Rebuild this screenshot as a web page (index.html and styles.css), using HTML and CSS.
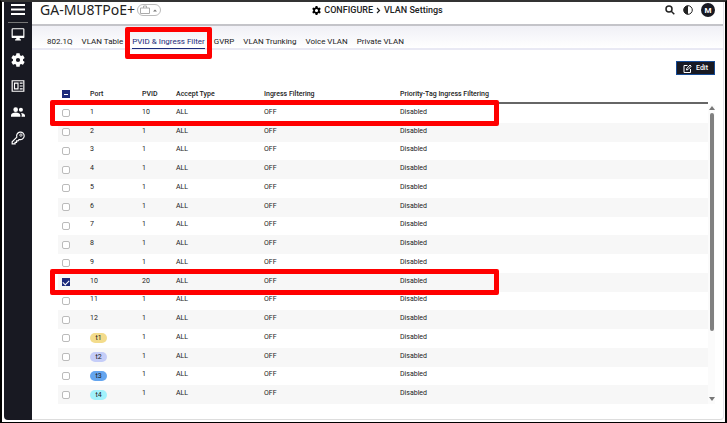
FILE: index.html
```html
<!DOCTYPE html>
<html lang="en">
<head>
  <meta charset="UTF-8" />
  <meta name="viewport" content="width=device-width, initial-scale=1.0" />
  <title>GA-MU8TPoE+ - VLAN Settings</title>
  <link rel="stylesheet" href="styles.css">
</head>
<body>
  <div class="frame">
    <nav class="sidebar" aria-label="Main menu">
      <button class="menu-btn" aria-label="Menu">
        <svg width="14" height="13" viewBox="0 0 14 13"><path d="M0 2h14M0 6.500h14M0 11h14" fill="none" stroke="#fff" stroke-width="2"/></svg>
      </button>
      <a href="#" aria-label="Monitor">
        <svg viewBox="0 0 24 24"><path d="M21 2H3a2 2 0 0 0-2 2v13a2 2 0 0 0 2 2h6v2H7v2h10v-2h-2v-2h6a2 2 0 0 0 2-2V4a2 2 0 0 0-2-2zm0 13H3V4h18z"/></svg>
      </a>
      <a href="#" aria-label="Configure">
        <svg viewBox="2 2 20 20"><path d="M19.140 12.940c.04-.3.060-.61.060-.94s-.02-.64-.07-.94l2.030-1.580a.49.49 0 0 0 .12-.61l-1.920-3.320a.49.49 0 0 0-.59-.22l-2.390.96a7 7 0 0 0-1.620-.94l-.36-2.540a.48.48 0 0 0-.48-.41h-3.840a.48.48 0 0 0-.47.41l-.36 2.540a7.400 7.400 0 0 0-1.620.94l-2.390-.96a.48.48 0 0 0-.59.22L2.740 8.870a.48.48 0 0 0 .12.61l2.030 1.580c-.05.3-.09.63-.09.94s.02.64.07.94l-2.030 1.580a.49.49 0 0 0-.12.61l1.920 3.320c.12.22.37.29.59.22l2.390-.96c.5.38 1.030.7 1.620.94l.36 2.540c.05.24.24.41.48.41h3.840c.24 0 .44-.17.47-.41l.36-2.540a7.400 7.400 0 0 0 1.620-.94l2.390.96c.22.080.47 0 .59-.22l1.920-3.320a.48.48 0 0 0-.12-.61zM12 15a3 3 0 1 1 0-6 3 3 0 0 1 0 6z"/></svg>
      </a>
      <a href="#" aria-label="Ports">
        <svg viewBox="0 0 24 24"><path d="M1 2h22v20H1zm2 2v16h18V4zM5 6h8v12H5zm2 2v8h4V8zm8-2h5v2h-5zm0 5h5v2h-5zm0 5h5v2h-5z" fill-rule="evenodd"/></svg>
      </a>
      <a href="#" aria-label="Users">
        <svg viewBox="0 0 24 24"><circle cx="8" cy="8" r="4"/><circle cx="17" cy="8" r="3.500"/><path d="M0 20v-2c0-3.500 4-5 8-5s8 1.500 8 5v2zM18 20h6v-2c0-3-3-4.500-7-4.500 1 1 1.500 2.500 1.500 4z"/></svg>
      </a>
      <a href="#" aria-label="Security">
        <svg viewBox="0 0 24 24"><path d="M10 10.500a6.500 6.500 0 1 1 4 4L12 17H9.500v2.500H7V22H2v-3.500z" fill="none" stroke="#fff" stroke-width="2"/><circle cx="17" cy="7" r="2" fill="none" stroke="#fff" stroke-width="1.500"/></svg>
      </a>
    </nav>

    <main class="main">
      <header class="topbar">
        <div class="device">
          <h1>GA-MU8TPoE+</h1>
          <button class="device-btn" aria-label="Device">
            <svg width="18" height="10" viewBox="0 0 18 10"><path d="M.5 3h9v5.500h-9zM3.500 3V1h3v2" fill="none" stroke="#aaa"/><path d="M13 6.500l2-2 2 2z" fill="#777"/></svg>
          </button>
        </div>
        <div class="crumbs">
          <svg width="9" height="9" viewBox="2 2 20 20"><path d="M10 2h4l.6 3 2 1.200 2.900-1 2 3.500L19.300 11v2l2.200 2.300-2 3.500-2.900-1-2 1.200-.6 3h-4l-.6-3-2-1.200-2.900 1-2-3.500L4.700 13v-2L2.500 8.700l2-3.500 2.900 1 2-1.200zM12 8.500a3.500 3.500 0 1 0 0 7 3.500 3.500 0 0 0 0-7z" fill-rule="evenodd"/></svg>
          <span>CONFIGURE</span>
          <svg width="5" height="7" viewBox="0 0 5 7"><path d="M1 1l2.500 2.500L1 6" fill="none" stroke="#222" stroke-width="1.200"/></svg>
          <span>VLAN Settings</span>
        </div>
        <div class="tools">
          <button aria-label="Search"><svg width="10" height="10" viewBox="0 0 10 10"><path d="M6.500 6.500L9.300 9.300M7 4a3 3 0 1 1-6 0 3 3 0 0 1 6 0z" fill="none" stroke="#222" stroke-width="1.500"/></svg></button>
          <button aria-label="Contrast"><svg width="10" height="10" viewBox="0 0 10 10"><circle cx="5" cy="5" r="4.300" fill="#fff" stroke="#222"/><path d="M5 .7a4.300 4.300 0 0 0 0 8.600z" fill="#222"/></svg></button>
          <button class="avatar">M</button>
        </div>
      </header>

      <nav class="tabs" aria-label="VLAN pages">
        <a href="#">802.1Q</a>
        <a href="#">VLAN Table</a>
        <a href="#" class="active">PVID &amp; Ingress Filter<span class="mark mark-tab"></span></a>
        <a href="#">GVRP</a>
        <a href="#">VLAN Trunking</a>
        <a href="#">Voice VLAN</a>
        <a href="#">Private VLAN</a>
      </nav>

      <section class="content">
        <div class="actions">
          <button class="edit-btn">
            <svg width="9" height="9" viewBox="0 0 9 9"><path d="M4.500 1.500H1v7h6.500V5M3.500 6l.3-1.500L7 1l1.200 1.200L5 5.600z" fill="none" stroke="#fff"/></svg>
            Edit
          </button>
        </div>

        <div class="table-area">
          <table>
            <thead>
              <tr>
                <th class="col-check"><input type="checkbox" id="checkAll" aria-label="Select all"></th>
                <th class="col-port">Port</th>
                <th class="col-pvid">PVID</th>
                <th class="col-type">Accept Type</th>
                <th class="col-ingress">Ingress Filtering</th>
                <th>Priority-Tag Ingress Filtering</th>
              </tr>
            </thead>
            <tbody id="rows"></tbody>
          </table>
          <div class="scrollbar">
            <span class="arrow up"></span>
            <span class="thumb"></span>
            <span class="arrow down"></span>
          </div>
        </div>
      </section>
    </main>
  </div>

  <script src="script.js"></script>
</body>
</html>
```
FILE: styles.css
```css
:root {
  --dark: #181922;
  --navy: #1b2a7b;
  --mark: #ff0000;
}

* {
  box-sizing: border-box;
}

body {
  margin: 0;
  color: #222;
  font-family: Roboto, sans-serif;
  font-size: 7px;
}

a {
  color: inherit;
  text-decoration: none;
}

button {
  border: none;
  padding: 0;
  background: none;
  color: inherit;
  font-family: inherit;
}

svg {
  display: block;
}

.frame {
  display: flex;
  min-height: 100vh;
  border: 2px solid #000;
  border-top-color: #333;
  padding: 0 1px 2px 2px;
  background: #fff;
}

.sidebar {
  width: 28px;
  flex-shrink: 0;
  display: flex;
  flex-direction: column;
  align-items: center;
  gap: 12px;
  background: var(--dark);
  border-radius: 0 0 0 4px;
}

.menu-btn {
  width: 20px;
  height: 21px;
  padding: 1px 3px 0;
  display: flex;
  border-bottom: 1px solid #777;
  margin-bottom: -8px;
}

.sidebar a svg {
  width: 14px;
  height: 14px;
  fill: #fff;
}

.main {
  flex: 1;
  min-width: 0;
  border-right: 1px solid #e4e4ea;
  border-bottom: 1px solid #ddd;
  border-radius: 0 0 4px 0;
}

.topbar {
  display: grid;
  grid-template-columns: 1fr auto 1fr;
  align-items: center;
  height: 24px;
  padding: 0 8px 6px;
  border-bottom: 2px solid #c4c4c9;
}

.device {
  display: flex;
  align-items: center;
  gap: 2px;
}

h1 {
  margin: 0;
  font-family: "Noto Sans", sans-serif;
  font-size: 14px;
  line-height: 16px;
  font-weight: 400;
}

.device-btn {
  padding: 0 2px;
  border: 1px solid #bbb;
  border-radius: 6px;
}

.crumbs {
  display: flex;
  align-items: center;
  gap: 3px;
  font-size: 9px;
  font-weight: 500;
}

.tools {
  display: flex;
  justify-content: flex-end;
  align-items: center;
  gap: 8px;
}

.avatar {
  width: 14px;
  height: 14px;
  border-radius: 50%;
  background: var(--dark);
  color: #fff;
  font-size: 8px;
  font-weight: 700;
}

.tabs {
  display: flex;
  gap: 9px;
  height: 24px;
  padding: 0 15px;
  border-bottom: 2px solid #e9e9f4;
  background: linear-gradient(#f0f0f6, #fff);
  font-size: 8px;
  line-height: 32px;
}

.tabs a {
  height: 23px;
}

.tabs .active {
  position: relative;
  border-bottom: 1px solid var(--navy);
  color: var(--navy);
}

.content {
  padding: 11px 8px 15px 26px;
}

.actions {
  display: flex;
  justify-content: flex-end;
}

.edit-btn {
  display: flex;
  align-items: center;
  justify-content: center;
  gap: 4px;
  width: 39px;
  height: 14px;
  border: 1px solid #164a94;
  background: var(--dark);
  color: #fff;
  font-size: 7px;
  font-weight: 500;
}

.table-area {
  display: flex;
  margin-top: 9px;
}

table {
  flex: 1;
  height: 320px;
  table-layout: fixed;
  border-collapse: separate;
  border-spacing: 0;
}

th,
td {
  padding: 0;
  text-align: left;
  line-height: 10px;
}

th {
  height: 20px;
  padding-top: 2px;
  border-bottom: 2px solid #666;
  font-weight: 500;
}

td {
  position: relative;
  padding-bottom: 3px;
}

td:first-child {
  padding: 0;
}

tbody tr:nth-child(even) {
  background: #f7f7f7;
}

.col-check {
  width: 32px;
}

.col-port {
  width: 52px;
}

.col-pvid {
  width: 34px;
}

.col-type {
  width: 88px;
}

.col-ingress {
  width: 136px;
}

input[type="checkbox"] {
  appearance: none;
  display: block;
  width: 8px;
  height: 8px;
  margin: 0 4px;
  border: 1px solid #bbb;
  border-radius: 2px;
  background: #fff;
}

input[type="checkbox"]:checked,
input[type="checkbox"]:indeterminate {
  display: flex;
  align-items: center;
  justify-content: center;
  border-color: var(--navy);
  border-radius: 0;
  background: var(--navy);
}

input[type="checkbox"]:checked::before {
  content: "";
  width: 5px;
  height: 3px;
  margin-bottom: 1px;
  border: solid #fff;
  border-width: 0 0 1px 1px;
  transform: rotate(-45deg);
}

input[type="checkbox"]:indeterminate::before {
  content: "";
  width: 4px;
  height: 1px;
  background: #fff;
}

.trunk {
  display: block;
  width: 17px;
  border-radius: 5px;
  text-align: center;
}

td:has(.trunk) {
  padding-bottom: 0;
}

.t1 { background: #f3dc8c; }
.t2 { background: #c5cdf8; }
.t3 { background: #64a5ef; }
.t4 { background: #a2f2fc; }

.scrollbar {
  display: flex;
  flex-direction: column;
  align-items: center;
  width: 7px;
  margin-top: 21px;
  padding: 1px 0 3px;
  background: #fbfbfb;
}

.arrow {
  border: 3px solid transparent;
}

.up {
  border-bottom: 4px solid #777;
  border-top: none;
}

.down {
  border-top: 4px solid #777;
  border-bottom: none;
  margin-top: auto;
}

.thumb {
  width: 4px;
  height: 74%;
  margin-top: 3px;
  border-radius: 2px;
  background: #808080;
}

/* red highlight boxes */
.mark {
  position: absolute;
  border: 5px solid var(--mark);
  border-radius: 2px;
  pointer-events: none;
  z-index: 1;
}

.mark-tab {
  top: 1px;
  left: -7px;
  right: -7px;
  height: 32px;
}

.mark-row {
  top: -4px;
  left: -8px;
  width: 449px;
  height: 26px;
}
```
FILE: script.js
```js
const ports = ['1', '2', '3', '4', '5', '6', '7', '8', '9', '10', '11', '12', 't1', 't2', 't3', 't4'];
const pvids = { '1': 10, '10': 20 };
const selected = ['10'];

function portLabel(port) {
  return port.startsWith('t') ? `<span class="trunk ${port}">${port}</span>` : port;
}

document.getElementById('rows').innerHTML = ports.map(port => `
  <tr>
    <td>
      <input type="checkbox" aria-label="Port ${port}" ${selected.includes(port) ? 'checked' : ''}>
      ${pvids[port] ? '<span class="mark mark-row"></span>' : ''}
    </td>
    <td>${portLabel(port)}</td>
    <td>${pvids[port] || 1}</td>
    <td>ALL</td>
    <td>OFF</td>
    <td>Disabled</td>
  </tr>`).join('');

document.getElementById('checkAll').indeterminate = true;
```
